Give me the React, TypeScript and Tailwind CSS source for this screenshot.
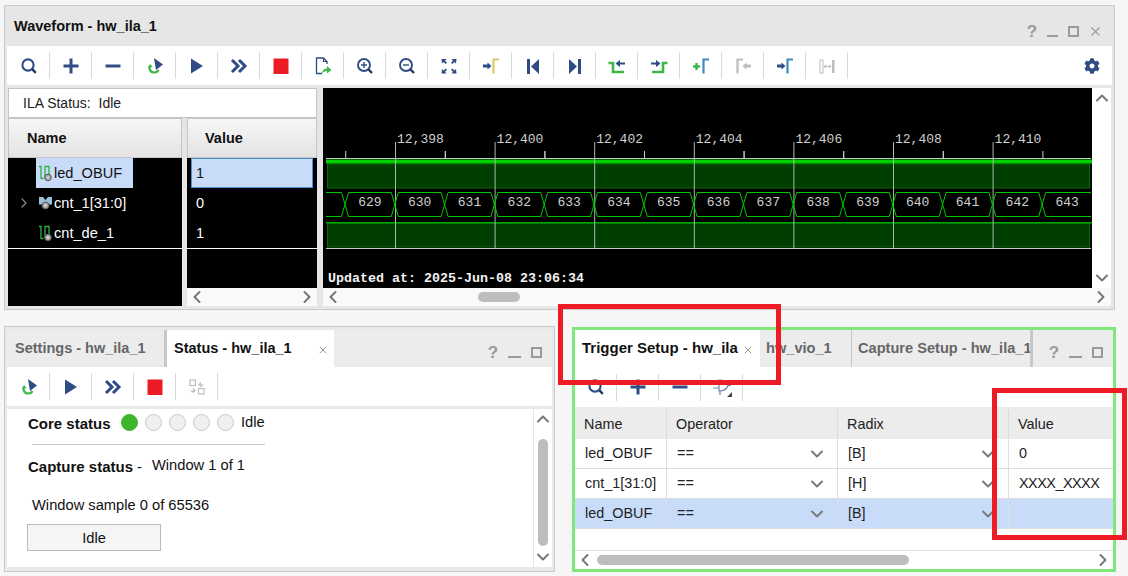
import { ChevronDown, ChevronLeft, ChevronRight, ChevronUp, X } from "lucide-react"
import { FaCog } from "react-icons/fa"
import type { ReactNode } from "react"

const BLUE = "#2f4d84"
const GREEN = "#41b649"
const RED = "#ed1c24"
const GREY = "#bdbdbd"
const YELLOW = "#dcc76a"
const SKY = "#3d8bc0"

function Ico({ children }: { children: ReactNode }) {
  return (
    <svg width="20" height="20" viewBox="0 0 20 20" fill="none">
      {children}
    </svg>
  )
}

const SearchIcon = () => (
  <Ico>
    <circle cx="9" cy="9" r="5.6" stroke={BLUE} strokeWidth="2.1" />
    <path d="M13.2 13.2l3.6 3.6" stroke="#22395f" strokeWidth="2.4" />
  </Ico>
)
const PlusIcon = () => (
  <Ico>
    <path d="M2.5 10h15M10 2.5v15" stroke={BLUE} strokeWidth="3" />
  </Ico>
)
const MinusIcon = () => (
  <Ico>
    <path d="M2.5 10h15" stroke={BLUE} strokeWidth="3" />
  </Ico>
)
const RerunIcon = () => (
  <Ico>
    <path d="M9 2l9 6.5-7 5.5z" fill={BLUE} />
    <path d="M5 9.5c-1.5 3 .3 7 4 7 2.2 0 3.6-1 4.4-2.6" stroke={GREEN} strokeWidth="2.2" />
    <path d="M2.8 11.2L5.2 8.2l2.6 3z" fill={GREEN} />
  </Ico>
)
const PlayIcon = () => (
  <Ico>
    <path d="M4 2.5l12 7.5-12 7.5z" fill={BLUE} />
  </Ico>
)
const ForwardIcon = () => (
  <Ico>
    <path d="M3 4l6 6-6 6M10 4l6 6-6 6" stroke={BLUE} strokeWidth="3" />
  </Ico>
)
const StopIcon = () => (
  <Ico>
    <rect x="2.5" y="2.5" width="15" height="15.5" fill={RED} />
  </Ico>
)
const ExportIcon = () => (
  <Ico>
    <path d="M14 8V5.5L10.5 2H3.5v15.5H9" stroke={BLUE} strokeWidth="1.3" />
    <path d="M10.5 2v3.5H14" stroke={BLUE} strokeWidth="1.1" />
    <path d="M9 17.500c.3-3.500 2.500-5 5-5V10l4.500 4-4.500 3.500V15c-2 0-3.500 1-5 2.500z" fill={GREEN} />
  </Ico>
)
const ZoomInIcon = () => (
  <Ico>
    <circle cx="9" cy="9" r="6" stroke={BLUE} strokeWidth="1.9" />
    <path d="M6 9h6M9 6v6" stroke={BLUE} strokeWidth="1.4" />
    <path d="M13.5 13.500l3.500 3.500" stroke="#22395f" strokeWidth="2.4" />
  </Ico>
)
const ZoomOutIcon = () => (
  <Ico>
    <circle cx="9" cy="9" r="6" stroke={BLUE} strokeWidth="1.9" />
    <path d="M6 9h6" stroke={BLUE} strokeWidth="1.4" />
    <path d="M13.500 13.500l3.500 3.500" stroke="#22395f" strokeWidth="2.4" />
  </Ico>
)
const FitIcon = () => (
  <Ico>
    <path d="M2.500 3h5L6 4.700 8 6.700 6.700 8 4.700 6 3 7.500zM17.500 3h-5L14 4.700 12 6.700 13.300 8l2-2L17 7.500zM2.500 17.500h5L6 15.800l2-2-1.300-1.300-2 2L3 13zM17.500 17.500h-5l1.500-1.700-2-2 1.300-1.300 2 2L17 13z" fill={BLUE} />
  </Ico>
)
const ArrowR = ({ x, c = BLUE }: { x: number; c?: string }) => (
  <path d={`M${x} 8.500h4.500V6.500l4 3.500-4 3.500v-2H${x}z`} fill={c} />
)
const ArrowL = ({ x, c = BLUE }: { x: number; c?: string }) => (
  <path d={`M${x} 8.500h-4.500V6.500l-4 3.500 4 3.500v-2H${x}z`} fill={c} />
)
const MarkerInIcon = () => (
  <Ico>
    <ArrowR x={2} />
    <path d="M12.500 17.500V3.500H18" stroke={YELLOW} strokeWidth="2.200" />
  </Ico>
)
const FirstIcon = () => (
  <Ico>
    <rect x="4" y="3" width="3" height="15" fill={BLUE} />
    <path d="M16 3v15l-8-7.500z" fill={BLUE} />
  </Ico>
)
const LastIcon = () => (
  <Ico>
    <rect x="13" y="3" width="3" height="15" fill={BLUE} />
    <path d="M4 3v15l8-7.500z" fill={BLUE} />
  </Ico>
)
const PrevEdgeIcon = () => (
  <Ico>
    <path d="M1.500 7h4.500v9h11" stroke={GREEN} strokeWidth="2.600" />
    <path d="M18 6.500h-5V4l-4.500 3.500 4.500 3.500V8.500h5z" fill={BLUE} />
  </Ico>
)
const NextEdgeIcon = () => (
  <Ico>
    <path d="M18.500 7H14v9H3" stroke={GREEN} strokeWidth="2.600" />
    <path d="M2 6.500h5V4l4.500 3.500L7 11V8.500H2z" fill={BLUE} />
  </Ico>
)
const AddMarkerIcon = () => (
  <Ico>
    <path d="M2 10.500h7M5.500 7v7" stroke={GREEN} strokeWidth="2.400" />
    <path d="M12.500 17.500V3.500H18" stroke={SKY} strokeWidth="2.200" />
  </Ico>
)
const PrevMarkerIcon = () => (
  <Ico>
    <path d="M4.500 17.500V3.500H10" stroke={GREY} strokeWidth="2.200" />
    <ArrowL x={18} c={GREY} />
  </Ico>
)
const NextMarkerIcon = () => (
  <Ico>
    <ArrowR x={2} />
    <path d="M12.500 17.500V3.500H18" stroke={SKY} strokeWidth="2.200" />
  </Ico>
)
const SwapIcon = () => (
  <Ico>
    <rect x="3" y="4" width="3" height="13" fill="none" stroke={GREY} />
    <rect x="15" y="4" width="2.500" height="13" fill={GREY} />
    <path d="M7 10.500h7M7 10.500l2-1.500M7 10.500l2 1.500M14 10.500l-2-1.500M14 10.500l-2 1.500" stroke={GREY} />
  </Ico>
)
const ExchangeIcon = () => (
  <Ico>
    <rect x="3" y="3" width="5.500" height="5.500" stroke={GREY} strokeWidth="1.200" />
    <rect x="11.500" y="11.500" width="5.500" height="5.500" stroke={GREY} strokeWidth="1.200" />
    <path d="M17 7.500h-3V5l-3 2.500 3 2.500" fill={GREY} />
    <path d="M3 13.500h3V11l3 2.500L6 16" fill={GREY} />
  </Ico>
)
const GateIcon = () => (
  <svg width="24" height="20" viewBox="0 0 24 20" fill="none">
    <path d="M9 3v11c5 0 8-2 9-5.500C17 5 14 3 9 3zM3 6h6M3 11h6M18 8.500h3M10 14v4" stroke="#6f84aa" strokeWidth="1.200" />
    <path d="M22 20v-5l-5 5z" fill="#444" />
  </svg>
)

function Toolbar({ icons, className }: { icons: ReactNode[]; className: string }) {
  return (
    <div className={`flex items-center bg-white ${className}`}>
      {icons.map((icon, i) => (
        <div key={i} className="flex h-[27px] w-[42px] items-center justify-center border-r border-[#d9d9d9]">
          {icon}
        </div>
      ))}
    </div>
  )
}

function WindowButtons({ close }: { close?: boolean }) {
  return (
    <div className="flex items-center gap-[8px] text-[#9a9a9a]">
      <span className="w-[14px] text-center text-[17px] font-bold leading-none">?</span>
      <span className={`mt-[9px] h-[2px] bg-[#9a9a9a] ${close ? "w-[11px]" : "w-[13px]"}`} />
      <span className="ml-[2px] h-[11px] w-[11px] border-2 border-[#9a9a9a]" />
      {close && <X size={15} strokeWidth={1.800} className="ml-[1px]" />}
    </div>
  )
}

function Wire({ bus }: { bus?: boolean }) {
  if (bus) {
    return (
      <svg width="15" height="16" viewBox="0 0 15 16" fill="none">
        <path d="M1 2h4l2.500 3L10 2h4v7.500H1z" fill="#9cc0d6" />
        <circle cx="7.500" cy="10.500" r="3.500" fill="#a8a8a8" stroke="#555" />
        <circle cx="7.500" cy="10.500" r="1" fill="#eee" />
      </svg>
    )
  }
  return (
    <svg width="15" height="18" viewBox="0 0 15 18" fill="none">
      <path d="M1 2.500h2v12h2.500" stroke="#2fae45" strokeWidth="1.300" />
      <path d="M7 14V2.500h4V11" stroke="#2fae45" strokeWidth="1.300" />
      <circle cx="10" cy="13.500" r="3.300" fill="#a8a8a8" stroke="#555" />
      <circle cx="10" cy="13.500" r="1" fill="#eee" />
    </svg>
  )
}

function SignalRow({ name, bus, selected }: { name: string; bus?: boolean; selected?: boolean }) {
  return (
    <div className="flex h-[30px] items-center">
      <span className="flex w-[28px] justify-end pr-[4px]">
        {bus && <ChevronRight size={16} strokeWidth={1.800} className="text-[#8a8a8a]" />}
      </span>
      <span className={`flex h-[30px] w-[97px] items-center pl-[2px] text-[14.6px] ${selected ? "bg-[#c8dcfa] text-[#111]" : "text-white"}`}>
        <Wire bus={bus} />
        <span className="ml-px pt-[2px]">{name}</span>
      </span>
    </div>
  )
}

function ColHeader({ label, className }: { label: string; className: string }) {
  return (
    <div className={`flex h-[40px] items-center border border-[#c4c4c4] bg-gradient-to-b from-[#f7f7f7] to-[#e3e3e3] pt-[2px] text-[14.5px] font-bold text-[#111] ${className}`}>
      {label}
    </div>
  )
}

const values = Array.from({ length: 15 }, (_, i) => 629 + i)
const crossings = values.map((_, i) => 22 + i * 49.8)
const majors = [72, 171.6, 271.200, 370.800, 470.400, 570, 669.600]
const labels = ["12,398", "12,400", "12,402", "12,404", "12,406", "12,408", "12,410"]

function Wave() {
  const busTop = "M3 104.500H" + (crossings[0] - 3.500)
  const hexes = crossings.map((c, i) => {
    const next = i < 14 ? c + 49.8 - 3.500 : 768
    return `M${c - 3.500} 104.500L${c + 3.500} 128.500H${next} M${c - 3.500} 128.500L${c + 3.500} 104.500H${next}`
  })
  return (
    <svg width="769" height="200" viewBox="0 0 769 200" className="block bg-black">
      <rect x="4.500" y="76" width="762" height="24" fill="#003f00" stroke="#0b6b0b" />
      <rect x="3" y="71.500" width="766" height="4" fill="#00cf00" />
      <rect x="4.500" y="135" width="762" height="24" fill="#003f00" stroke="#0b6b0b" />
      <rect x="3" y="134" width="766" height="1.500" fill="#00a800" />
      <path d="M3 70.500H768M3 160.500H768" stroke="#c8c8c8" />
      {majors.map((x, i) => (
        <g key={x}>
          <path d={`M${x + 0.500} 54V160`} stroke="#a8bca8" />
          <path d={`M${x - 49.300} 63V70M${x + 50.300} 63V70`} stroke="#c8c8c8" />
          <text x={x + 2} y="55" fill="#d0d0d0" fontFamily="'Liberation Mono', monospace" fontSize="13">
            {labels[i]}
          </text>
        </g>
      ))}
      <path d={busTop + " M3 128.500H" + (crossings[0] - 3.500) + " " + hexes.join(" ")} stroke="#00c800" fill="none" />
      {values.map((v, i) => (
        <text key={v} x={crossings[i] + 24.900} y="118" textAnchor="middle" fill="#d0d0d0" fontFamily="'Liberation Mono', monospace" fontSize="13">
          {v}
        </text>
      ))}
      <text x="5" y="194" fill="#f2f2f2" fontFamily="'Liberation Mono', monospace" fontSize="13.330" fontWeight="bold">
        Updated at: 2025-Jun-08 23:06:34
      </text>
    </svg>
  )
}

function HBar({ className, left, width }: { className: string; left?: number; width?: number }) {
  return (
    <div className={`relative flex h-[18px] items-center justify-between bg-[#f9f9f9] text-[#777] ${className}`}>
      <ChevronLeft size={20} strokeWidth={2.400} />
      {width !== undefined && (
        <span className="absolute top-[4px] h-[10px] rounded-full bg-[#bdbdbd]" style={{ left, width }} />
      )}
      <ChevronRight size={20} strokeWidth={2.400} />
    </div>
  )
}

function Dot({ on }: { on?: boolean }) {
  return (
    <span className={`h-[17px] w-[17px] rounded-full border ${on ? "border-[#3fb52d] bg-[#3fb52d]" : "border-[#c8c8c8] bg-[#f0f0f0]"}`} />
  )
}

const triggerRows = [
  { name: "led_OBUF", radix: "[B]", value: "0" },
  { name: "cnt_1[31:0]", radix: "[H]", value: "XXXX_XXXX" },
  { name: "led_OBUF", radix: "[B]", value: "", selected: true },
]

function TriggerTable() {
  return (
    <div className="text-[14.4px] text-[#222]">
      <div className="grid h-[32px] grid-cols-[92px_171px_171px_1fr] items-center bg-[#ececec] pt-[3px]">
        {["Name", "Operator", "Radix", "Value"].map((h) => (
          <div key={h} className="flex h-full items-center border-r border-[#dcdcdc] pl-[9px] last:border-r-0">
            {h}
          </div>
        ))}
      </div>
      {triggerRows.map((r, i) => (
        <div
          key={i}
          className={`grid h-[30px] grid-cols-[92px_171px_171px_1fr] items-center border-b border-[#dedede] ${r.selected ? "bg-[#c8dcfa]" : "bg-white"}`}
        >
          <div className="flex h-full items-center border-r border-[#dedede] pl-[10px]">{r.name}</div>
          <div className="flex h-full items-center justify-between border-r border-[#dedede] pl-[10px] pr-[10px]">
            <span>==</span>
            <ChevronDown size={20} strokeWidth={2.400} className="text-[#7a7a7a]" />
          </div>
          <div className="flex h-full items-center justify-between border-r border-[#dedede] pl-[10px] pr-[10px]">
            <span>{r.radix}</span>
            <ChevronDown size={20} strokeWidth={2.400} className="text-[#7a7a7a]" />
          </div>
          <div className="flex h-full items-center pl-[10px] tracking-[-0.5px]">{r.value}</div>
        </div>
      ))}
    </div>
  )
}

export default function App() {
  return (
    <div className="relative h-[576px] w-[1128px] overflow-hidden bg-[#f6f6f6] pl-[4px] pt-[5px] font-['Liberation_Sans',Arial,sans-serif] text-[14px]">
      {/* waveform window */}
      <div className="h-[305px] w-[1111px] border border-[#c9c9c9] bg-[#e6e6e6] px-[2px]">
        <div className="flex h-[40px] items-center justify-between pl-[7px] pr-[9px]">
          <span className="pt-[2px] text-[14.500px] font-bold text-[#111]">Waveform - hw_ila_1</span>
          <div className="mt-[10px]">
            <WindowButtons close />
          </div>
        </div>
        <div className="flex h-[39px] items-center justify-between bg-white pr-[12px]">
          <Toolbar
            className="h-[39px] pl-[1px]"
            icons={[
              <SearchIcon />, <PlusIcon />, <MinusIcon />, <RerunIcon />, <PlayIcon />, <ForwardIcon />, <StopIcon />,
              <ExportIcon />, <ZoomInIcon />, <ZoomOutIcon />, <FitIcon />, <MarkerInIcon />, <FirstIcon />, <LastIcon />,
              <PrevEdgeIcon />, <NextEdgeIcon />, <AddMarkerIcon />, <PrevMarkerIcon />, <NextMarkerIcon />, <SwapIcon />,
            ]}
          />
          <FaCog size={16} color={BLUE} />
        </div>
        <div className="mt-[3px] flex">
          <div className="w-[310px] shrink-0 pl-px">
            <div className="flex h-[30px] w-[309px] items-center border border-[#c4c4c4] bg-white pl-[14px] text-[#222]">
              ILA Status:&nbsp; Idle
            </div>
            <div className="flex">
              <div className="mr-[5px] w-[175px]">
                <ColHeader label="Name" className="pl-[18px]" />
                <div className="h-[148px] bg-black">
                  <div className="h-[91px] border-b border-white">
                    <SignalRow name="led_OBUF" selected />
                    <SignalRow name="cnt_1[31:0]" bus />
                    <SignalRow name="cnt_de_1" />
                  </div>
                </div>
              </div>
              <div className="w-[130px]">
                <ColHeader label="Value" className="pl-[17px]" />
                <div className="h-[130px] bg-black text-[14.5px] text-white">
                  <div className="h-[91px] border-b border-white">
                    <div className="ml-[4px] flex h-[30px] w-[122px] items-center border border-[#4a90d0] bg-[#c8dcfa] pl-[4px] pt-[2px] text-[#111]">
                      1
                    </div>
                    <div className="flex h-[30px] items-center pl-[9px] pt-[2px]">0</div>
                    <div className="flex h-[30px] items-center pl-[9px] pt-[2px]">1</div>
                  </div>
                </div>
                <HBar className="w-[130px]" />
              </div>
            </div>
          </div>
          <div className="ml-[6px] w-[788px]">
            <div className="flex h-[200px]">
              <Wave />
              <div className="flex w-[19px] flex-col items-center justify-between bg-white text-[#777]">
                <ChevronUp size={20} strokeWidth={2.400} />
                <ChevronDown size={20} strokeWidth={2.400} />
              </div>
            </div>
            <HBar className="w-[788px]" left={155} width={42} />
          </div>
        </div>
      </div>

      <div className="mt-[16px] flex items-start">
        {/* status window */}
        <div className="h-[246px] w-[551px] border border-[#c9c9c9] bg-[#e9e9e9] px-[2px] pt-[3px]">
          <div className="flex h-[37px] items-stretch bg-[#ececec]">
            <div className="flex w-[160px] items-center border-r-[3px] border-[#c8c8c8] pl-[8px] text-[14.500px] font-bold text-[#666]">
              Settings - hw_ila_1
            </div>
            <div className="flex w-[167px] items-center justify-between bg-white pl-[7px] pr-[5px] text-[14.500px] font-bold text-[#111]">
              Status - hw_ila_1
              <X size={12} strokeWidth={2} className="mt-[3px] text-[#999]" />
            </div>
            <div className="ml-auto mr-[10px] mt-[14px]">
              <WindowButtons />
            </div>
          </div>
          <Toolbar
            className="h-[39px] pl-[1px]"
            icons={[<RerunIcon />, <PlayIcon />, <ForwardIcon />, <StopIcon />, <ExchangeIcon />]}
          />
          <div className="mt-[3px] flex h-[158px] bg-white text-[14.700px] text-[#111]">
            <div className="flex-1 pl-[21px]">
              <div className="flex h-[28px] w-[240px] items-center">
                <span className="mt-[3px] w-[93px] text-[15px] font-bold">Core status</span>
                <div className="mb-[2px] flex items-center gap-[7px]">
                  <Dot on />
                  <Dot />
                  <Dot />
                  <Dot />
                  <Dot />
                </div>
                <span className="mb-[2px] ml-[7px]">Idle</span>
              </div>
              <div className="ml-[4px] mt-[7px] h-px w-[233px] bg-[#c8c8c8]" />
              <div className="mt-[14px] flex h-[17px] items-center">
                <span className="text-[15px] font-bold">Capture status</span>
                <span className="ml-[4px]">-</span>
                <span className="mb-[4px] ml-[10px]">Window 1 of 1</span>
              </div>
              <div className="ml-[4px] mt-[18px]">Window sample 0 of 65536</div>
              <button className="-ml-px mt-[8px] flex h-[27px] w-[134px] items-center justify-center border border-[#bbb] bg-[#f5f5f5] text-[#111]">
                Idle
              </button>
            </div>
            <div className="relative flex w-[19px] flex-col items-center justify-between border-l border-[#e4e4e4] text-[#777]">
              <ChevronUp size={20} strokeWidth={2.400} />
              <span className="absolute left-[4px] top-[30px] h-[107px] w-[10px] rounded-full bg-[#bdbdbd]" />
              <ChevronDown size={20} strokeWidth={2.400} />
            </div>
          </div>
        </div>

        {/* trigger setup window */}
        <div className="ml-[17px] mt-px flex h-[245px] w-[544px] flex-col border-[3px] border-[#7fe87a] bg-white">
          <div className="flex h-[37px] shrink-0 items-stretch bg-[#ececec]">
            <div className="flex w-[185px] items-center whitespace-nowrap bg-white pl-[7px] pr-[6px] text-[15px] font-bold text-[#111]">
              Trigger Setup - hw_ila
              <X size={12} strokeWidth={2} className="ml-auto mt-[3px] text-[#999]" />
            </div>
            <div className="flex w-[92px] items-center border-r border-[#c8c8c8] pl-[6px] text-[14.600px] font-bold text-[#666]">
              hw_vio_1
            </div>
            <div className="flex w-[181px] items-center overflow-hidden whitespace-nowrap border-r-[3px] border-[#c8c8c8] pl-[6px] text-[14.600px] font-bold text-[#666]">
              Capture Setup - hw_ila_1
            </div>
            <div className="ml-auto mr-[10px] mt-[14px]">
              <WindowButtons />
            </div>
          </div>
          <Toolbar
            className="h-[40px] shrink-0"
            icons={[<SearchIcon />, <PlusIcon />, <MinusIcon />, <GateIcon />]}
          />
          <TriggerTable />
          <div className="flex-1 border-b border-[#e0e0e0]" />
          <HBar className="h-[18px] bg-white" left={22} width={312} />
        </div>
      </div>

      {/* red annotation boxes */}
      <div className="absolute left-[558px] top-[304px] h-[81px] w-[223px] border-[5px] border-[#ed1c24]" />
      <div className="absolute left-[992px] top-[388px] h-[152px] w-[135px] border-[5px] border-[#ed1c24]" />
    </div>
  )
}
